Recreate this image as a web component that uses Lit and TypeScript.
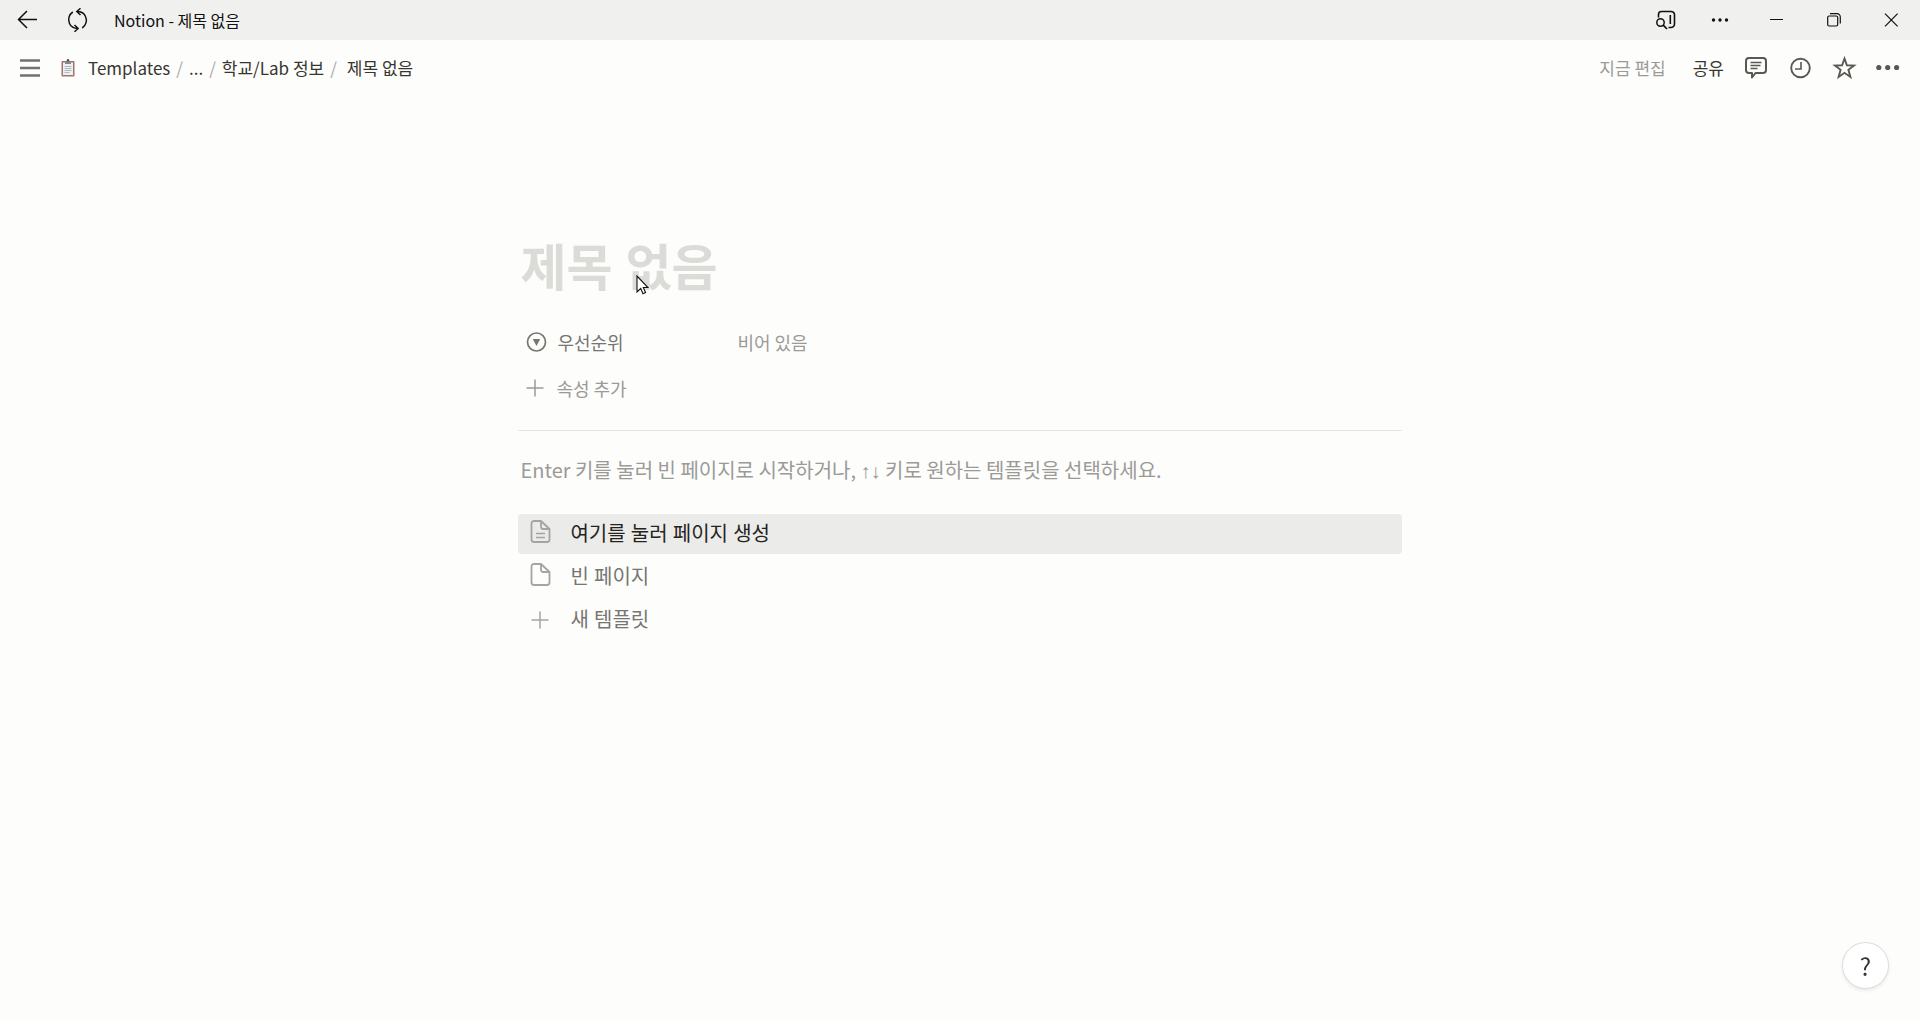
import { LitElement, html, css, svg } from "lit";
import { customElement } from "lit/decorators.js";

const icon = (size: number, body: unknown) => html`
  <svg class="icon" width=${size} height=${size} viewBox="0 0 ${size} ${size}"
    fill="none" stroke="currentColor" aria-hidden="true">${body}</svg>`;

const sheet = svg`<path stroke-width="1.800" stroke-linejoin="round" d="M13 -1H6A2.500 2.500 0 0 0 3.500 1.500v16A2.500 2.500 0 0 0 6 20h13a2.500 2.500 0 0 0 2.500-2.500V7zM13 -1v6a2 2 0 0 0 2 2h6.500"/>`;

const icons = {
  back: icon(22, svg`<path d="M21 10.500H2M11 2L2.500 10.500l8.500 8.500" stroke-width="1.5"/>`),
  refresh: icon(24, svg`<path stroke-width="1.5" d="M7.800 4A9.200 9.200 0 0 0 4.500 15.500Q6.500 20.300 13 20.500M17.200 20A9.200 9.200 0 0 0 20.500 8.500Q18.500 3.500 12 3.500M15.500 7L11.800 3.500 15.500 0.300M9.500 17l3.600 3.500L9.500 23.700"/>`),
  searchPane: icon(22, svg`<path stroke-width="1.600" d="M5.500 8.500V5.500a3 3 0 0 1 3-3h9.500a3.500 3.500 0 0 1 3.500 3v9.500a3.500 3.500 0 0 1-3.500 3.500H15.500"/><path stroke-width="1.600" d="M17.300 6V15"/><circle cx="7.500" cy="13.500" r="3.700" stroke-width="1.500"/><path stroke-width="1.700" d="M10.200 16.200L14 20"/>`),
  dots: icon(18, svg`<g fill="currentColor" stroke="none"><circle cx="1.500" cy="9" r="1.700"/><circle cx="8" cy="9" r="1.700"/><circle cx="14.500" cy="9" r="1.700"/></g>`),
  minimize: icon(14, svg`<path d="M-1 6.500h13"/>`),
  restore: icon(14, svg`<rect x="-.300" y="3" width="10" height="10" rx="1.500" stroke-width="1.200"/><path stroke-width="1.200" d="M2 .7h7a3.300 3.300 0 0 1 3.300 3.300v6.500"/>`),
  close: icon(14, svg`<path stroke-width="1.200" d="M0 .7l12.600 12.600M12.600.7L0 13.300"/>`),
  menu: icon(20, svg`<path stroke-width="2.400" d="M0 2.500h20M0 10h20M0 17.500h20"/>`),
  comment: icon(24, svg`<path stroke-width="2" stroke-linejoin="round" d="M5 2h14A3 3 0 0 1 22 5v9a3 3 0 0 1-3 3h-7.500L8 21.500V17H5A3 3 0 0 1 2 14V5A3 3 0 0 1 5 2z"/><path stroke-width="1.400" d="M6.500 6.500h11M6.500 9.500h10M6.500 12.500h7"/>`),
  clock: icon(22, svg`<circle cx="11.500" cy="11" r="9.300" stroke-width="1.900"/><path stroke-width="1.600" d="M12 5v7H6"/>`),
  star: icon(24, svg`<path stroke-width="1.900" stroke-linejoin="miter" d="M12.500 2.500l2.400 6.800 7.100.2-5.600 4.300 2 7.200-5.900-4.200-5.900 4.200 2-7.200L3 9.500l7.100-.2z"/>`),
  more: icon(24, svg`<g fill="currentColor" stroke="none"><circle cx="2.800" cy="11.500" r="2.600"/><circle cx="11.700" cy="11.500" r="2.600"/><circle cx="20.600" cy="11.500" r="2.600"/></g>`),
  select: icon(20, svg`<circle cx="10.500" cy="10" r="9" stroke-width="1.700"/><path d="M6.800 7h7.400l-3.700 7z" fill="currentColor" stroke="none"/>`),
  plus: icon(18, svg`<path stroke-width="1.500" d="M9 .5v17M.5 9h17"/>`),
  doc: icon(24, svg`${sheet}<path stroke-width="1.400" d="M8 11.500h9M8 15.500h9"/>`),
  blank: icon(24, sheet),
};

const clipboard = html`
  <svg class="icon" width="14" height="18" viewBox="0 0 14 18" aria-hidden="true">
    <rect x=".5" y="2" width="13" height="15.500" rx="1" fill="#a4746c"/>
    <rect x="2" y="3.500" width="10" height="12.500" fill="#eef1f4"/>
    <path d="M4 2.500h1.800a1.200 1.200 0 0 1 2.400 0H10v2.500H4z" fill="#7d8a90"/>
    <circle cx="7" cy="1.200" r="1.200" fill="#44505a"/>
    <path d="M3.500 7.500h7M3.500 9.500h7M3.500 11.500h7M3.500 13.500h5" stroke="#a3b4b9" stroke-width=".9"/>
  </svg>`;

@customElement("app-root")
export class AppRoot extends LitElement {
  static styles = css`
    :host {
      display: flex;
      flex-direction: column;
      min-height: 100vh;
      background: #fdfdfc;
      color: #37352f;
      font: 18px/24px "Noto Sans CJK KR", "Open Sans", sans-serif;
    }
    * { box-sizing: border-box; }
    button {
      display: flex;
      align-items: center;
      border: 0;
      padding: 0;
      background: none;
      color: inherit;
      font: inherit;
      text-align: left;
    }
    a { color: inherit; text-decoration: none; }
    .icon { display: block; flex: none; overflow: visible; }
    .titlebar {
      display: flex;
      justify-content: space-between;
      height: 40px;
      background: #f0f0ee;
      color: #111;
      font-size: 16px;
    }
    .group { display: flex; align-items: center; }
    .nav { width: 50px; height: 40px; justify-content: center; }
    .group.left { padding-left: 2px; }
    .caption { margin-left: 12px; }
    .win { width: 57px; height: 40px; justify-content: center; }
    .topbar {
      display: flex;
      justify-content: space-between;
      height: 56px;
      padding: 0 14px 0 20px;
      font-size: 17px;
    }
    .crumbs { display: flex; align-items: center; }
    .menu { margin-right: 21px; color: #74726d; }
    .crumb { display: flex; align-items: center; gap: 13px; white-space: nowrap; }
    .crumb.current { padding-left: 4px; }
    .sep { margin: 0 6px; color: #aaa9a5; }
    .actions { display: flex; align-items: center; gap: 8px; color: #5a5853; }
    .edited { margin-right: 13px; color: #9b9a97; }
    .share { padding: 0 6px; color: #37352f; }
    .act { width: 36px; height: 36px; justify-content: center; }
    .page {
      width: 46%;
      margin: 0 auto;
      padding-top: 136px;
    }
    .heading { position: relative; }
    h1 {
      margin: 0;
      padding-left: 2px;
      font: 700 50px/70px "Open Sans", "Noto Sans CJK KR", sans-serif;
      color: #dbdbd8;
    }
    .pointer { position: absolute; left: 118px; top: 43px; }
    .props { margin: 0; padding: 20px 8px 0; border-bottom: 1px solid #e6e6e3; height: 129px; }
    .prop { display: flex; align-items: center; height: 39px; }
    .name { display: flex; align-items: center; gap: 11px; width: 211px; color: #777570; }
    .add { gap: 12px; height: 36px; margin-top: 9px; color: #9b9a97; }
    .value { color: #9b9a97; }
    .hint { margin: 27px 0 31px; padding-left: 2px; font-size: 20px; color: #9b9a97; }
    .keys { font-family: "Liberation Sans", sans-serif; }
    ul { list-style: none; margin: 0; padding: 0; display: grid; gap: 3px; }
    .row {
      width: 100%;
      height: 40px;
      padding-left: 10px;
      font: 20px/28px "Open Sans", "Noto Sans CJK KR", sans-serif;
      color: #777570;
      border-radius: 4px;
    }
    .row .slot { display: grid; place-items: center; width: 24px; margin-right: 18px; color: #a5a4a1; }
    .row.active { background: #ebebe9; color: #25231e; }
    .help {
      position: fixed;
      right: 32px;
      bottom: 32px;
      width: 45px;
      height: 45px;
      justify-content: center;
      border-radius: 50%;
      background: #fff;
      font-size: 24px;
      box-shadow: 0 0 0 1px #dddddb, 0 2px 4px #e2e2df;
    }
  `;

  render() {
    const rows = [
      { label: "여기를 눌러 페이지 생성", glyph: icons.doc, active: true },
      { label: "빈 페이지", glyph: icons.blank, active: false },
      { label: "새 템플릿", glyph: icons.plus, active: false },
    ];
    return html`
      <header class="titlebar">
        <div class="group left">
          <button class="nav" aria-label="뒤로">${icons.back}</button>
          <button class="nav" aria-label="새로 고침">${icons.refresh}</button>
          <span class="caption">Notion - 제목 없음</span>
        </div>
        <div class="group">
          <button class="win" aria-label="검색">${icons.searchPane}</button>
          <button class="win" aria-label="메뉴">${icons.dots}</button>
          <button class="win" aria-label="최소화">${icons.minimize}</button>
          <button class="win" aria-label="이전 크기로">${icons.restore}</button>
          <button class="win" aria-label="닫기">${icons.close}</button>
        </div>
      </header>
      <div class="topbar">
        <nav class="crumbs">
          <button class="menu" aria-label="사이드바">${icons.menu}</button>
          <a class="crumb" href="#templates">${clipboard}Templates</a><span class="sep">/</span>
          <a class="crumb" href="#more">...</a><span class="sep">/</span>
          <a class="crumb" href="#lab">학교/Lab 정보</a><span class="sep">/</span>
          <a class="crumb current" href="#page">제목 없음</a>
        </nav>
        <div class="actions">
          <span class="edited">지금 편집</span>
          <button class="share">공유</button>
          <button class="act" aria-label="댓글">${icons.comment}</button>
          <button class="act" aria-label="업데이트">${icons.clock}</button>
          <button class="act" aria-label="즐겨찾기">${icons.star}</button>
          <button class="act" aria-label="더 보기">${icons.more}</button>
        </div>
      </div>
      <main class="page">
        <div class="heading">
          <h1>제목 없음</h1>
          <svg class="pointer" width="13" height="20" viewBox="0 0 13 20" aria-hidden="true">
            <path d="M1 1v16l3.700-3.500L7 18.800l2.600-1.200-2.300-5.100H12z" fill="#fff" stroke="#111" stroke-width="1.100"/>
          </svg>
        </div>
        <section class="props">
          <div class="prop">
            <span class="name">${icons.select}우선순위</span>
            <span class="value">비어 있음</span>
          </div>
          <button class="add">${icons.plus}속성 추가</button>
        </section>
        <p class="hint">Enter 키를 눌러 빈 페이지로 시작하거나, <span class="keys">↑↓</span> 키로 원하는 템플릿을 선택하세요.</p>
        <ul>
          ${rows.map((r) => html`<li>
            <button class="row ${r.active ? "active" : ""}"><span class="slot">${r.glyph}</span>${r.label}</button>
          </li>`)}
        </ul>
      </main>
      <button class="help" aria-label="도움말">?</button>
    `;
  }
}
